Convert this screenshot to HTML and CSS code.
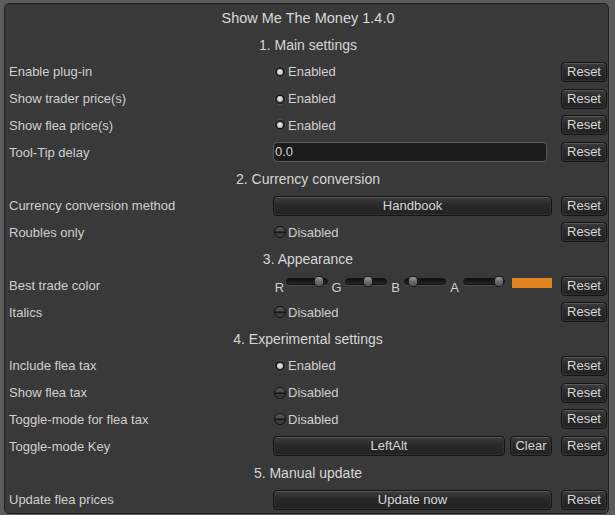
FILE: index.html
```html
<!DOCTYPE html>
<html>
<head>
<meta charset="utf-8">
<link rel="stylesheet" href="styles.css">
</head>
<body>
<div class="window">
  <div class="row title">Show Me The Money 1.4.0</div>
  <div class="row header">1. Main settings</div>
  <div class="row setting">
    <span class="label">Enable plug-in</span>
    <div class="ctrl"><span class="toggle on"></span><span class="ttext">Enabled</span></div>
    <button class="btn reset">Reset</button>
  </div>
  <div class="row setting">
    <span class="label">Show trader price(s)</span>
    <div class="ctrl"><span class="toggle on"></span><span class="ttext">Enabled</span></div>
    <button class="btn reset">Reset</button>
  </div>
  <div class="row setting">
    <span class="label">Show flea price(s)</span>
    <div class="ctrl"><span class="toggle on"></span><span class="ttext">Enabled</span></div>
    <button class="btn reset">Reset</button>
  </div>
  <div class="row setting">
    <span class="label">Tool-Tip delay</span>
    <div class="ctrl"><div class="field">0.0</div></div>
    <button class="btn reset">Reset</button>
  </div>
  <div class="row header">2. Currency conversion</div>
  <div class="row setting">
    <span class="label">Currency conversion method</span>
    <div class="ctrl"><button class="btn wide">Handbook</button></div>
    <button class="btn reset">Reset</button>
  </div>
  <div class="row setting">
    <span class="label">Roubles only</span>
    <div class="ctrl"><span class="toggle"></span><span class="ttext">Disabled</span></div>
    <button class="btn reset">Reset</button>
  </div>
  <div class="row header">3. Appearance</div>
  <div class="row setting">
    <span class="label">Best trade color</span>
    <div class="ctrl sliders">
      <span class="ch ch-r">R</span><span class="track"><span class="thumb" style="left:27px"></span></span>
      <span class="ch">G</span><span class="track"><span class="thumb" style="left:17px"></span></span>
      <span class="ch">B</span><span class="track"><span class="thumb" style="left:3px"></span></span>
      <span class="ch">A</span><span class="track"><span class="thumb" style="left:30px"></span></span>
      <span class="swatch"></span>
    </div>
    <button class="btn reset">Reset</button>
  </div>
  <div class="row setting">
    <span class="label">Italics</span>
    <div class="ctrl"><span class="toggle"></span><span class="ttext">Disabled</span></div>
    <button class="btn reset">Reset</button>
  </div>
  <div class="row header">4. Experimental settings</div>
  <div class="row setting">
    <span class="label">Include flea tax</span>
    <div class="ctrl"><span class="toggle on"></span><span class="ttext">Enabled</span></div>
    <button class="btn reset">Reset</button>
  </div>
  <div class="row setting">
    <span class="label">Show flea tax</span>
    <div class="ctrl"><span class="toggle"></span><span class="ttext">Disabled</span></div>
    <button class="btn reset">Reset</button>
  </div>
  <div class="row setting">
    <span class="label">Toggle-mode for flea tax</span>
    <div class="ctrl"><span class="toggle"></span><span class="ttext">Disabled</span></div>
    <button class="btn reset">Reset</button>
  </div>
  <div class="row setting">
    <span class="label">Toggle-mode Key</span>
    <div class="ctrl keyrow"><button class="btn key">LeftAlt</button><button class="btn clear">Clear</button></div>
    <button class="btn reset">Reset</button>
  </div>
  <div class="row header">5. Manual update</div>
  <div class="row setting">
    <span class="label">Update flea prices</span>
    <div class="ctrl"><button class="btn wide">Update now</button></div>
    <button class="btn reset">Reset</button>
  </div>
</div>
</body>
</html>
```

FILE: styles.css
```css
html, body {
  margin: 0;
  padding: 0;
  background: #5c5c5c;
  font-family: "Liberation Sans", Arial, sans-serif;
  color: #d0d0d0;
}

.window {
  box-sizing: border-box;
  width: 605px;
  height: 511px;
  margin: 3px 0 0 4px;
  border: 1px solid #202020;
  border-radius: 5px;
  background: #393939;
  padding: 1px 1px 0 4px;
  display: flex;
  flex-direction: column;
  overflow: hidden;
}

.row {
  flex: 1 1 0;
  min-height: 0;
  display: flex;
  align-items: center;
}

.title {
  justify-content: center;
  font-size: 14.5px;
  color: #dadada;
}

.header {
  justify-content: center;
  font-size: 14px;
  color: #d6d6d6;
}

.setting {
  display: grid;
  grid-template-columns: 255px 279px 46px;
  column-gap: 9px;
  align-items: center;
  font-size: 13px;
}

.label {
  white-space: nowrap;
  color: #d0d0d0;
}

.ctrl {
  display: flex;
  align-items: center;
  height: 20px;
}

.toggle {
  box-sizing: border-box;
  width: 12px;
  height: 12px;
  margin-left: 1px;
  border-radius: 50%;
  border: 1px solid #101010;
  background: linear-gradient(#5e5e5e 0%, #444 44%, #161616 46%, #161616 56%, #333 58%, #444 100%);
  display: flex;
  align-items: center;
  justify-content: center;
}

.toggle.on {
  border: 1px solid #505050;
  background: #1c1c1c;
}

.toggle.on::after {
  content: "";
  width: 6px;
  height: 6px;
  border-radius: 50%;
  background: radial-gradient(circle at 45% 40%, #e8e8e8, #b0b0b0);
}

.ttext {
  margin-left: 2px;
  color: #d0d0d0;
}

.field {
  box-sizing: border-box;
  width: 274px;
  height: 20px;
  border: 1px solid #5a5a5a;
  border-radius: 4px;
  background: #1b1b1b;
  padding-left: 1px;
  line-height: 18px;
  color: #d0d0d0;
}

.btn {
  box-sizing: border-box;
  height: 20px;
  padding: 0;
  border: 1px solid #141414;
  border-radius: 4px;
  background: linear-gradient(#3f3f3f, #2a2a2a 40%, #222222);
  box-shadow: inset 0 1px 0 #575757, inset 0 0 0 1px #333;
  color: #d8d8d8;
  font-family: "Liberation Sans", Arial, sans-serif;
  font-size: 13px;
  line-height: 18px;
  text-align: center;
}

.reset {
  width: 46px;
}

.wide {
  width: 279px;
}

.keyrow .key {
  width: 232px;
}

.keyrow .clear {
  width: 42px;
  margin-left: 5px;
}

.sliders {
  font-size: 13px;
}

.ch {
  width: 17px;
  text-align: center;
  color: #d0d0d0;
  margin-top: 3px;
}

.ch-r {
  width: 13px;
}

.track {
  position: relative;
  box-sizing: border-box;
  width: 42px;
  height: 7px;
  border-radius: 4px;
  border: 1px solid #111;
  background: linear-gradient(#0f0f0f, #262626);
  box-shadow: 0 1px 0 #4a4a4a;
  margin-bottom: 9px;
}

.thumb {
  position: absolute;
  top: -3px;
  box-sizing: border-box;
  width: 10px;
  height: 11px;
  border-radius: 4px;
  border: 1px solid #1a1a1a;
  background: linear-gradient(#9a9a9a, #6c6c6c 50%, #555 100%);
}

.swatch {
  width: 40px;
  height: 10px;
  margin-left: 7px;
  margin-bottom: 6px;
  background: #e0821e;
}
```
